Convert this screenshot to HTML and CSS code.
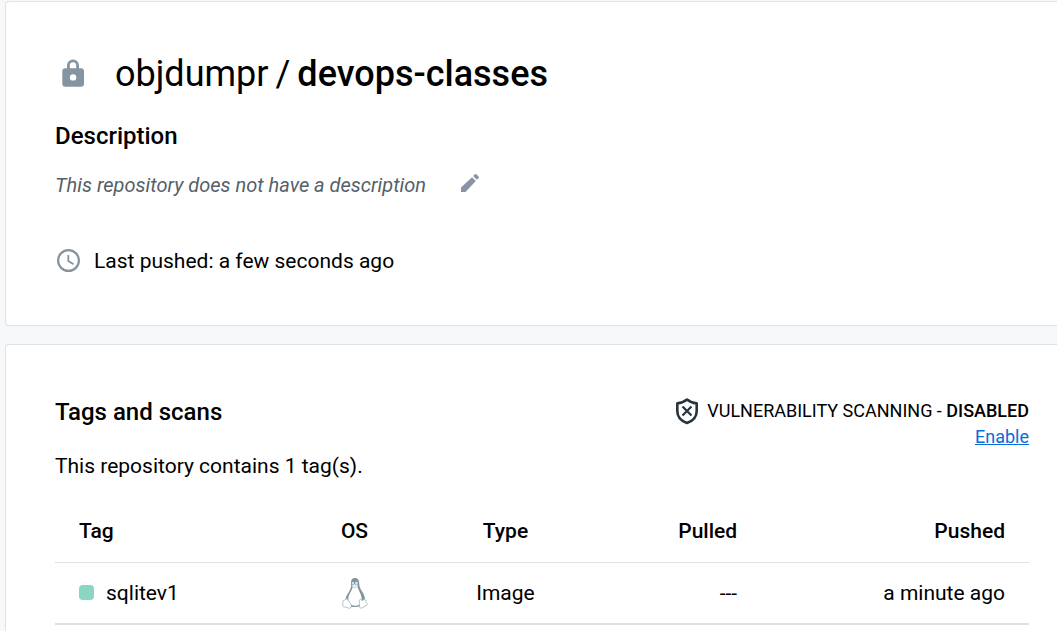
FILE: index.html
```html
<!DOCTYPE html>
<html lang="en">
<head>
<meta charset="utf-8">
<meta name="viewport" content="width=device-width, initial-scale=1">
<title>objdumpr / devops-classes</title>
<link rel="stylesheet" href="styles.css">
</head>
<body>
<main class="page">
  <section class="card">
    <header class="repo-header">
      <svg class="icon icon-lock" viewBox="0 0 36 36" aria-hidden="true">
        <path fill="currentColor" fill-rule="evenodd" d="M26 12.200H24v-2.700a6 6 0 0 0-12 0V12.200H10.300a3 3 0 0 0-3 3v12.600a3 3 0 0 0 3 3h15.700a3 3 0 0 0 3-3V15.200a3 3 0 0 0-3-3ZM14.800 12.200v-2.700a3.200 3.200 0 0 1 6.400 0V12.200ZM18.100 18.200a3.200 3.200 0 1 1 0 6.400a3.200 3.200 0 0 1 0-6.400Z"/>
      </svg>
      <h1 class="repo-title"><span>objdumpr</span> <span>/</span> <strong>devops-classes</strong></h1>
    </header>
    <h2 class="heading">Description</h2>
    <div class="description">
      <em>This repository does not have a description</em>
      <button class="edit-button" type="button" aria-label="Edit description">
        <svg class="icon icon-pencil" viewBox="0 0 24 24" aria-hidden="true">
          <path fill="currentColor" d="M3 16.500V21h4.500L17.810 9.940l-3.750-3.750L3 16.500ZM20.710 7.040a1 1 0 0 0 0-1.410l-2.340-2.340a1 1 0 0 0-1.410 0l-1.830 1.830l3.750 3.750l1.830-1.830Z"/>
        </svg>
      </button>
    </div>
    <p class="pushed">
      <svg class="icon icon-clock" viewBox="0 0 24 24" fill="none" stroke="currentColor" aria-hidden="true">
        <circle cx="11.500" cy="11.500" r="10.400" stroke-width="2.200"/>
        <path stroke-width="1.800" d="M11.300 6v6l5.200 3.300"/>
      </svg>
      Last pushed: a few seconds ago
    </p>
  </section>

  <section class="card card-tags">
    <div class="tags-header">
      <h2 class="heading">Tags and scans</h2>
      <div class="scanning">
        <span class="scan-status">
          <svg class="icon icon-shield" viewBox="0 0 24 28" fill="none" stroke="currentColor" aria-hidden="true">
            <path stroke-width="2.600" stroke-linejoin="round" d="M12 2.500C9.500 4.700 6 6 2.300 6.400V14c0 5.800 4 10 9.700 12c5.700-2 9.700-6.200 9.700-12V6.400C18 6 14.500 4.700 12 2.500Z"/>
            <path stroke-width="2.200" d="m7.500 9.500 9 9m0-9-9 9"/>
          </svg>
          <span>VULNERABILITY SCANNING - <strong>DISABLED</strong></span>
        </span>
        <a class="enable" href="#enable">Enable</a>
      </div>
    </div>
    <p class="summary">This repository contains 1 tag(s).</p>
    <table class="tags">
      <thead>
        <tr>
          <th class="col-tag" scope="col">Tag</th>
          <th class="col-os" scope="col">OS</th>
          <th class="col-type" scope="col">Type</th>
          <th class="col-pulled" scope="col">Pulled</th>
          <th class="col-pushed" scope="col">Pushed</th>
        </tr>
      </thead>
      <tbody>
        <tr>
          <td class="col-tag"><span class="tag-name"><span class="status-dot"></span>sqlitev1</span></td>
          <td class="col-os">
            <svg class="icon icon-linux" viewBox="0 0 26 32" role="img" aria-label="Linux">
              <path fill="#7f949f" d="M13 1C9.700 1 8.900 3.600 9.100 6.500C9.400 10.700 8.300 12.500 6.200 16C4.500 18.700 3.200 21 3.500 24L8 29h10l5-5c.3-3.600-1-6.600-3.100-9.700C17.800 11.100 17.300 9 17.200 6C17.100 3 15.800 1 13 1Z"/>
              <path fill="#fff" d="M10.800 9.800C9.800 14.300 6.300 17.500 6.300 22c0 3.600 2.500 7 6.500 7s6.900-2.500 6.900-7.300c0-4-3-7.700-4.300-11.900Z"/>
              <ellipse cx="11" cy="6" rx="1.100" ry="1.300" fill="#dce3e6"/>
              <ellipse cx="14.500" cy="6" rx="1.300" ry="1.500" fill="#dce3e6"/>
              <path fill="#e5eaed" stroke="#b8c4ca" stroke-width=".5" d="M9.800 8.200 12.500 6.900l3.600 1.300c-.2 1.800-1.800 2.800-3.300 2.800c-1.400 0-2.600-1.100-3-2.800Z"/>
              <path fill="#fff" stroke="#aab8bf" stroke-width=".9" d="M1.300 23.300c1.300.2 1.800-.7 2.700-1.300c1.400-.5 2 1 3 2.500c1 1.500 2.700 3 2.500 4.700c-.2 2.300-2.500 2.400-4.500 1.400c-1.600-.8-3.800-.5-4.200-1.500c-.3-1 .4-1.700.1-3c-.2-1.300-.3-2.200.4-2.800Z"/>
              <path fill="#fff" stroke="#aab8bf" stroke-width=".9" d="M17.800 22.600c.8-.6 1.100.5 2.300.7c1.100.1 1.900-1 2.800-.7c1.100.4.8 2 1.300 2.900c.5.8 1.500 1 1.300 1.900c-.3 1-2.400 1.300-3.500 2.300c-1.300 1.300-3.300 2-4.400.7c-.9-1.200 0-3.200-.1-4.900c0-1.300-.3-2.400.3-2.900Z"/>
              <path fill="none" stroke="#7f949f" stroke-width="1.200" d="M9 28.800c3 .8 5.500.8 8.500-.1"/>
            </svg>
          </td>
          <td class="col-type">Image</td>
          <td class="col-pulled">---</td>
          <td class="col-pushed">a minute ago</td>
        </tr>
      </tbody>
    </table>
  </section>
</main>
</body>
</html>
```
FILE: styles.css
```css
* {
  box-sizing: border-box;
}

body {
  margin: 0;
  background: #f7f8fa;
  color: #000;
  font-family: Roboto, "Liberation Sans", sans-serif;
  font-size: 21px;
  line-height: 28px;
}

h1, h2, p {
  margin: 0;
}

strong {
  font-weight: 500;
}

.page {
  display: flex;
  flex-direction: column;
  gap: 18px;
  min-height: 100vh;
  padding: 1px 0 0 5px;
}

.card {
  padding: 48px 28px 50px 49px;
  background: #fff;
  border: 1px solid #e1e2e6;
  border-right: 0;
  border-radius: 4px 0 0 4px;
}

.card-tags {
  flex: 1;
  padding-bottom: 0;
  border-bottom: 0;
  border-radius: 4px 0 0 0;
}

.icon {
  display: block;
  flex: none;
  color: #8494a0;
}

.repo-header {
  display: flex;
  align-items: center;
  gap: 24px;
}

.icon-lock {
  width: 36px;
  height: 36px;
}

.repo-title {
  display: flex;
  gap: 7px;
  font-size: 36px;
  font-weight: 400;
  line-height: 48px;
}

.heading {
  font-size: 24px;
  font-weight: 500;
  line-height: 32px;
}

.repo-header + .heading {
  margin-top: 22px;
}

.description {
  display: flex;
  align-items: center;
  gap: 32px;
  margin-top: 19px;
  color: #556069;
  font-size: 20px;
}

.edit-button {
  padding: 0 0 4px;
  border: 0;
  background: none;
}

.icon-pencil {
  width: 24px;
  height: 24px;
  color: #8993a5;
}

.pushed {
  display: flex;
  align-items: center;
  gap: 13px;
  margin-top: 48px;
  padding-left: 2px;
}

.icon-clock {
  width: 24px;
  height: 24px;
}

.tags-header {
  display: flex;
  justify-content: space-between;
}

.tags-header .heading {
  padding-top: 3px;
}

.scanning {
  display: flex;
  flex-direction: column;
  align-items: flex-end;
  font-size: 18px;
  line-height: 24px;
  padding-top: 4px;
}

.scan-status {
  display: flex;
  align-items: center;
  gap: 8px;
}

.icon-shield {
  width: 24px;
  height: 28px;
  color: #27343e;
}

.enable {
  color: #086dd7;
}

.summary {
  margin-top: 3px;
}

.tags {
  width: 100%;
  margin-top: 20px;
  border-collapse: collapse;
  table-layout: fixed;
}

.tags th,
.tags td {
  height: 62px;
  padding: 0 24px;
  border-bottom: 1px solid #e0e0e0;
  font-weight: 400;
  text-align: right;
}

.tags th {
  font-weight: 500;
}

.tags td {
  border-bottom-width: 2px;
}

.tags .col-tag {
  width: 23%;
  text-align: left;
}

.tags .col-os,
.tags .col-type {
  width: 15.5%;
  text-align: center;
}

.tags .col-pulled {
  width: 18.5%;
}

.tag-name {
  display: flex;
  align-items: center;
  gap: 12px;
}

.status-dot {
  width: 15px;
  height: 15px;
  border-radius: 4px;
  background: #8ad6c0;
}

.icon-linux {
  width: 26px;
  height: 32px;
  margin: 0 auto;
}
```
